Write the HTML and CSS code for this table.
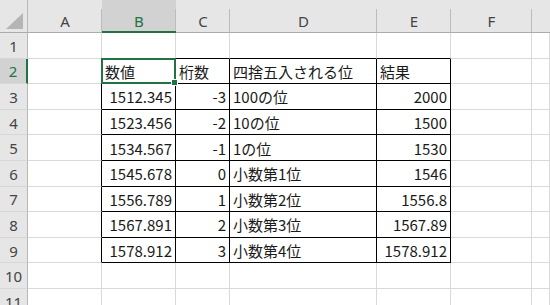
FILE: index.html
```html
<!DOCTYPE html>
<html lang="ja">
<head>
<meta charset="utf-8">
<link rel="stylesheet" href="styles.css">
</head>
<body>
<div class="sheet">
  <!-- header row -->
  <div class="corner"><svg class="tri" width="18" height="17" viewBox="0 0 18 17"><polygon points="17,0 17,16 0,16" fill="#b5b5b5"/></svg></div>
  <div class="ch">A</div>
  <div class="ch sel">B</div>
  <div class="ch">C</div>
  <div class="ch">D</div>
  <div class="ch">E</div>
  <div class="ch">F</div>
  <div class="ch last"></div>

  <!-- row 1 -->
  <div class="rh">1</div>
  <div class="c"></div>
  <div class="c top"></div>
  <div class="c top"></div>
  <div class="c top"></div>
  <div class="c top"></div>
  <div class="c"></div>
  <div class="c"></div>

  <!-- row 2 -->
  <div class="rh sel">2</div>
  <div class="c lft"></div>
  <div class="c t active">数値<span class="selbox"></span><span class="handle"></span></div>
  <div class="c t">桁数</div>
  <div class="c t">四捨五入される位</div>
  <div class="c t">結果</div>
  <div class="c"></div>
  <div class="c"></div>

  <!-- row 3 -->
  <div class="rh">3</div>
  <div class="c lft"></div>
  <div class="c t n">1512.345</div>
  <div class="c t n">-3</div>
  <div class="c t">100の位</div>
  <div class="c t n">2000</div>
  <div class="c"></div>
  <div class="c"></div>

  <!-- row 4 -->
  <div class="rh">4</div>
  <div class="c lft"></div>
  <div class="c t n">1523.456</div>
  <div class="c t n">-2</div>
  <div class="c t">10の位</div>
  <div class="c t n">1500</div>
  <div class="c"></div>
  <div class="c"></div>

  <!-- row 5 -->
  <div class="rh">5</div>
  <div class="c lft"></div>
  <div class="c t n">1534.567</div>
  <div class="c t n">-1</div>
  <div class="c t">1の位</div>
  <div class="c t n">1530</div>
  <div class="c"></div>
  <div class="c"></div>

  <!-- row 6 -->
  <div class="rh">6</div>
  <div class="c lft"></div>
  <div class="c t n">1545.678</div>
  <div class="c t n">0</div>
  <div class="c t">小数第1位</div>
  <div class="c t n">1546</div>
  <div class="c"></div>
  <div class="c"></div>

  <!-- row 7 -->
  <div class="rh">7</div>
  <div class="c lft"></div>
  <div class="c t n">1556.789</div>
  <div class="c t n">1</div>
  <div class="c t">小数第2位</div>
  <div class="c t n">1556.8</div>
  <div class="c"></div>
  <div class="c"></div>

  <!-- row 8 -->
  <div class="rh">8</div>
  <div class="c lft"></div>
  <div class="c t n">1567.891</div>
  <div class="c t n">2</div>
  <div class="c t">小数第3位</div>
  <div class="c t n">1567.89</div>
  <div class="c"></div>
  <div class="c"></div>

  <!-- row 9 -->
  <div class="rh">9</div>
  <div class="c lft"></div>
  <div class="c t n">1578.912</div>
  <div class="c t n">3</div>
  <div class="c t">小数第4位</div>
  <div class="c t n">1578.912</div>
  <div class="c"></div>
  <div class="c"></div>

  <!-- row 10 -->
  <div class="rh">10</div>
  <div class="c"></div>
  <div class="c"></div>
  <div class="c"></div>
  <div class="c"></div>
  <div class="c"></div>
  <div class="c"></div>
  <div class="c"></div>

  <!-- row 11 -->
  <div class="rh">11</div>
  <div class="c"></div>
  <div class="c"></div>
  <div class="c"></div>
  <div class="c"></div>
  <div class="c"></div>
  <div class="c"></div>
  <div class="c"></div>
</div>
</body>
</html>
```

FILE: styles.css
```css
html, body {
  margin: 0;
  padding: 0;
  background: #ffffff;
}

body {
  width: 550px;
  height: 305px;
  overflow: hidden;
  font-family: "Noto Sans CJK JP", "Noto Sans", sans-serif;
}

.sheet {
  display: grid;
  grid-template-columns: 28px 74px 74px 54px 147px 74px 81px 18px;
  grid-template-rows: 33px repeat(11, 25.6px);
  width: 550px;
}

.corner {
  background: #e6e6e6;
  border-right: 1px solid #b8b8b8;
  border-bottom: 1px solid #ababab;
  box-sizing: border-box;
  display: flex;
  align-items: flex-end;
  justify-content: flex-end;
  padding: 0 3px 2px 0;
}

.tri {
  display: block;
}

.ch {
  background: #e6e6e6;
  border-bottom: 1px solid #ababab;
  box-sizing: border-box;
  position: relative;
  display: flex;
  align-items: center;
  justify-content: center;
  padding-top: 10px;
  font-family: "Noto Sans", "Noto Sans CJK JP", sans-serif;
  font-size: 15px;
  color: #444444;
}

.ch::after {
  content: "";
  position: absolute;
  right: 0;
  top: 9px;
  bottom: 0;
  width: 1px;
  background: #bcbcbc;
}

.ch.sel {
  background: #d2d2d2;
  color: #217346;
  border-bottom: 2px solid #217346;
  padding-top: 11px;
}

.ch.last::after {
  display: none;
}

.rh {
  background: #e6e6e6;
  border-right: 1px solid #b8b8b8;
  border-bottom: 1px solid #d6d6d6;
  box-sizing: border-box;
  display: flex;
  align-items: center;
  justify-content: center;
  padding-top: 1px;
  font-family: "Noto Sans", "Noto Sans CJK JP", sans-serif;
  font-size: 15px;
  color: #444444;
}

.rh.sel {
  background: #d2d2d2;
  color: #217346;
  border-right: 2px solid #217346;
}

.c {
  border-right: 1px solid #d9d9d9;
  border-bottom: 1px solid #d9d9d9;
  box-sizing: border-box;
  display: flex;
  align-items: center;
  padding: 1px 3px 0 3px;
  font-size: 15px;
  color: #1a1a1a;
  white-space: nowrap;
  overflow: visible;
}

.c.top {
  border-bottom-color: #000000;
}

.c.lft {
  border-right-color: #000000;
}

.c.t {
  border-right-color: #000000;
  border-bottom-color: #000000;
}

.c.n {
  justify-content: flex-end;
}

.active {
  position: relative;
}

.selbox {
  position: absolute;
  left: -1px;
  top: -1px;
  right: -1px;
  bottom: -1px;
  border: 2px solid #217346;
  pointer-events: none;
}

.handle {
  position: absolute;
  right: -3px;
  bottom: -3px;
  width: 5px;
  height: 5px;
  background: #217346;
  border: 1px solid #ffffff;
}
```
